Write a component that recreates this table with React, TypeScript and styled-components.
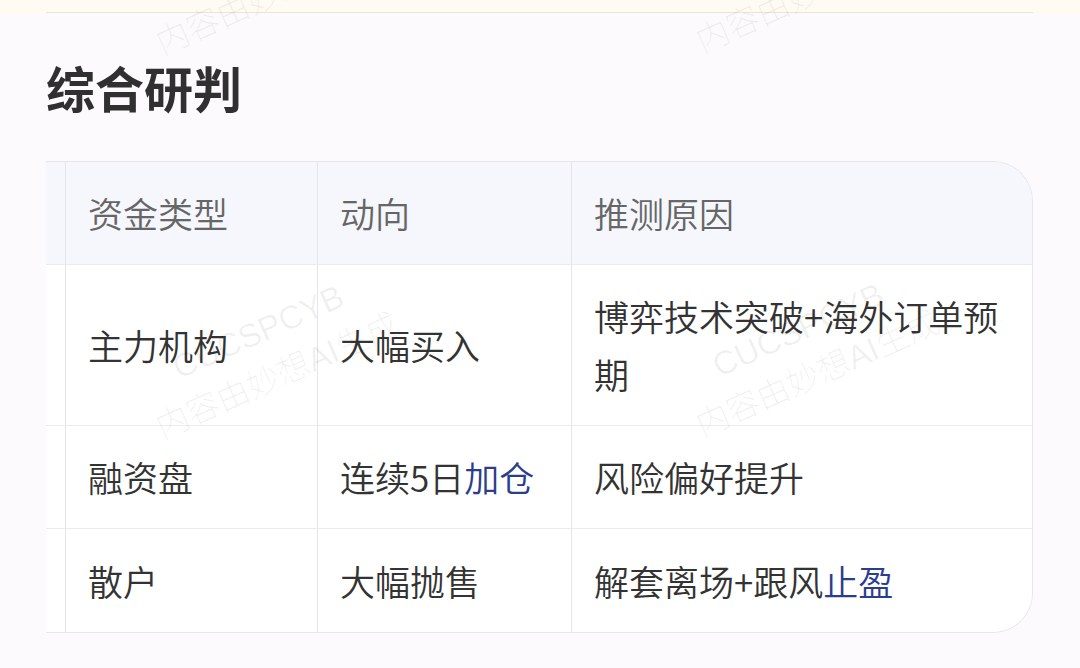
import React from "react";
import styled, { createGlobalStyle } from "styled-components";

const GlobalStyle = createGlobalStyle`
  html, body { margin: 0; padding: 0; }
  body {
    background: #fdfafd;
    font-family: "Noto Sans CJK SC", "Noto Sans", sans-serif;
  }
  * { box-sizing: border-box; }
`;

const Page = styled.div`
  position: relative;
  width: 1080px;
  height: 668px;
  overflow: hidden;
  background: #fdfafd;
`;

const TopStrip = styled.div`
  background: #fffbf3;
  height: 14px;
  padding: 0 47px 0 46px;
  display: flex;
  align-items: flex-end;
`;

const Divider = styled.div`
  flex: 1;
  height: 1px;
  margin-bottom: 1px;
  background: #e8e5de;
`;

const Section = styled.section`
  padding: 0 47px 0 46px;
`;

const Title = styled.h2`
  margin: 39px 0 40px;
  font-size: 49px;
  line-height: 68px;
  font-weight: 700;
  color: #303030;
`;

const TableFrame = styled.div`
  display: grid;
  grid-template-columns: 20px 252px 254px 1fr;
  border: 1px solid #e6e6eb;
  border-left: none;
  border-radius: 0 40px 40px 0;
  overflow: hidden;
  background: #ffffff;
`;

const Cell = styled.div<{ $head?: boolean; $lastRow?: boolean; $lastCol?: boolean }>`
  display: flex;
  align-items: center;
  min-height: 103px;
  padding: 22px 22px 22px 22px;
  font-size: 35px;
  font-weight: 350;
  line-height: 58px;
  color: ${(p) => (p.$head ? "#666666" : "#333333")};
  background: ${(p) => (p.$head ? "#f5f7fd" : "#ffffff")};
  border-bottom: ${(p) => (p.$lastRow ? "none" : "1px solid #ebebef")};
  border-right: ${(p) => (p.$lastCol ? "none" : "1px solid #e4e4ea")};
`;

const EdgeCell = styled(Cell)`
  padding: 0;
`;

const Highlight = styled.span`
  color: #2b3d8d;
`;

const WatermarkLayer = styled.div`
  position: absolute;
  inset: 0;
  pointer-events: none;
  z-index: 2;
`;

const Watermark = styled.div<{ $x: number; $y: number }>`
  position: absolute;
  left: ${(p) => p.$x - 200}px;
  top: ${(p) => p.$y - 48}px;
  width: 400px;
  text-align: center;
  transform: rotate(-24deg);
  font-family: "Liberation Sans", "Noto Sans CJK SC", sans-serif;
  font-size: 33px;
  font-weight: 300;
  line-height: 48px;
  color: rgba(0, 0, 0, 0.06);
  white-space: nowrap;
`;

type Row = [React.ReactNode, React.ReactNode, React.ReactNode];

const header: Row = ["资金类型", "动向", "推测原因"];

const rows: Row[] = [
  ["主力机构", "大幅买入", "博弈技术突破+海外订单预期"],
  [
    "融资盘",
    <>
      连续5日<Highlight>加仓</Highlight>
    </>,
    "风险偏好提升",
  ],
  [
    "散户",
    "大幅抛售",
    <>
      解套离场+跟风<Highlight>止盈</Highlight>
    </>,
  ],
];

const marks = [
  { x: 268, y: -30 },
  { x: 808, y: -32 },
  { x: 268, y: 354 },
  { x: 808, y: 352 },
];

export default function App() {
  const allRows: Row[] = [header, ...rows];
  return (
    <Page>
      <GlobalStyle />
      <TopStrip>
        <Divider />
      </TopStrip>
      <Section>
        <Title>综合研判</Title>
        <TableFrame>
          {allRows.map((row, ri) => {
            const head = ri === 0;
            const lastRow = ri === allRows.length - 1;
            return (
              <React.Fragment key={ri}>
                <EdgeCell $head={head} $lastRow={lastRow} />
                {row.map((content, ci) => (
                  <Cell
                    key={ci}
                    $head={head}
                    $lastRow={lastRow}
                    $lastCol={ci === row.length - 1}
                  >
                    <span>{content}</span>
                  </Cell>
                ))}
              </React.Fragment>
            );
          })}
        </TableFrame>
      </Section>
      <WatermarkLayer>
        {marks.map((m, i) => (
          <Watermark key={i} $x={m.x} $y={m.y}>
            CUCSPCYB
            <br />
            内容由妙想AI生成
          </Watermark>
        ))}
      </WatermarkLayer>
    </Page>
  );
}
